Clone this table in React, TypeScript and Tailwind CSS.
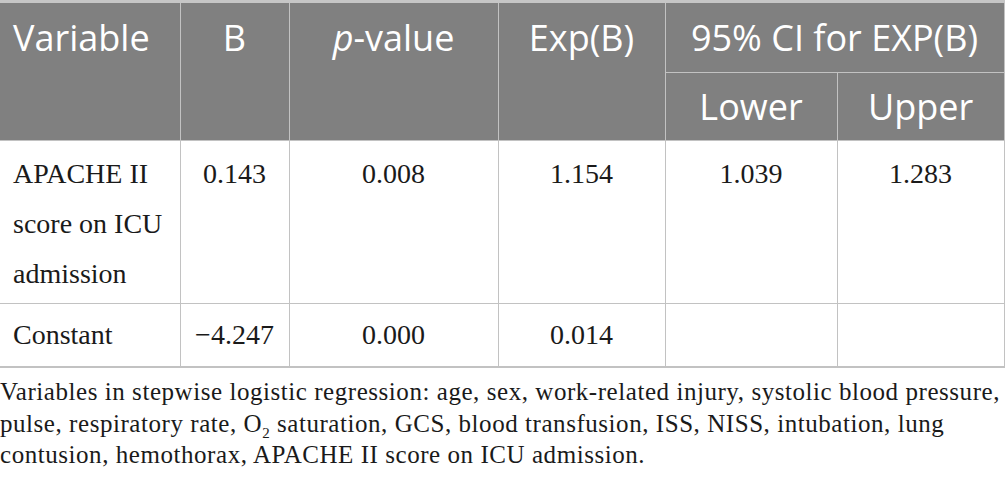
import React from "react";

const head = "font-['Open_Sans',sans-serif] text-[36px] font-normal text-white";
const cellBorder = "border border-[#c2c2c2]";

export default function App() {
  return (
    <div className="w-[1005px] h-[492px] bg-white overflow-hidden">
      {/* Table */}
      <table className="w-[1004px] table-fixed border-collapse border-t-[3px] border-t-[#c6c6c6]">
        <colgroup>
          <col className="w-[180px]" />
          <col className="w-[109px]" />
          <col className="w-[209px]" />
          <col className="w-[167px]" />
          <col className="w-[172px]" />
          <col className="w-[167px]" />
        </colgroup>
        <thead className="bg-[#808080]">
          <tr>
            <th
              rowSpan={2}
              className={`${head} ${cellBorder} border-l-0 px-[13px] pt-[7px] pb-[6px] text-left align-top leading-[56px]`}
            >
              Variable
            </th>
            <th rowSpan={2} className={`${head} ${cellBorder} pt-[7px] pb-[6px] text-center align-top leading-[56px]`}>
              B
            </th>
            <th rowSpan={2} className={`${head} ${cellBorder} pt-[7px] pb-[6px] text-center align-top leading-[56px]`}>
              <i>p</i>-value
            </th>
            <th rowSpan={2} className={`${head} ${cellBorder} pt-[7px] pb-[6px] text-center align-top leading-[56px]`}>
              Exp(B)
            </th>
            <th colSpan={2} className={`${head} ${cellBorder} whitespace-nowrap pt-[7px] pb-[6px] text-center leading-[56px]`}>
              95% CI for EXP(B)
            </th>
          </tr>
          <tr>
            <th className={`${head} ${cellBorder} pt-[6px] pb-[5px] text-center leading-[56px]`}>Lower</th>
            <th className={`${head} ${cellBorder} pt-[6px] pb-[5px] text-center leading-[56px]`}>Upper</th>
          </tr>
        </thead>
        <tbody className="font-['Liberation_Serif',serif] text-[28px] text-[#1a1a1a] leading-[50px]">
          <tr>
            <td className={`${cellBorder} border-l-0 px-[13px] pt-[8px] pb-[4px] align-top`}>
              APACHE II score on ICU admission
            </td>
            <td className={`${cellBorder} pt-[8px] pb-[4px] text-center align-top`}>0.143</td>
            <td className={`${cellBorder} pt-[8px] pb-[4px] text-center align-top`}>0.008</td>
            <td className={`${cellBorder} pt-[8px] pb-[4px] text-center align-top`}>1.154</td>
            <td className={`${cellBorder} pt-[8px] pb-[4px] text-center align-top`}>1.039</td>
            <td className={`${cellBorder} pt-[8px] pb-[4px] text-center align-top`}>1.283</td>
          </tr>
          <tr>
            <td className={`${cellBorder} border-l-0 border-b-2 px-[13px] py-[6px] align-top`}>Constant</td>
            <td className={`${cellBorder} border-b-2 py-[6px] text-center align-top`}>−4.247</td>
            <td className={`${cellBorder} border-b-2 py-[6px] text-center align-top`}>0.000</td>
            <td className={`${cellBorder} border-b-2 py-[6px] text-center align-top`}>0.014</td>
            <td className={`${cellBorder} border-b-2 py-[6px]`}></td>
            <td className={`${cellBorder} border-b-2 py-[6px]`}></td>
          </tr>
        </tbody>
      </table>

      {/* Footnote */}
      <p className="mt-[8px] whitespace-nowrap font-['Liberation_Serif',serif] text-[25px] leading-[31.5px] tracking-[0.55px] text-[#1a1a1a]">
        Variables in stepwise logistic regression: age, sex, work-related injury, systolic blood pressure,
        <br />
        pulse, respiratory rate, O<sub className="text-[15px] align-[-3px]">2</sub> saturation, GCS, blood
        transfusion, ISS, NISS, intubation, lung
        <br />
        contusion, hemothorax, APACHE II score on ICU admission.
      </p>
    </div>
  );
}
